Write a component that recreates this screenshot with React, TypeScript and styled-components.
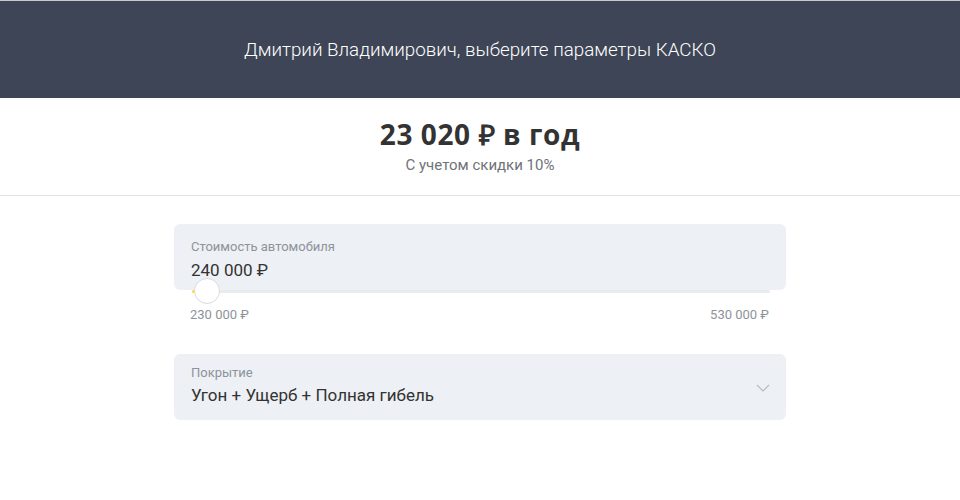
import React from 'react';
import styled, { createGlobalStyle } from 'styled-components';

const GlobalStyle = createGlobalStyle`
  body {
    margin: 0;
    background: #fff;
    font-family: Roboto, 'Liberation Sans', Arial, sans-serif;
    color: #333;
  }
`;

const Header = styled.header`
  height: 97px;
  border-top: 1px solid #c9c9c9;
  background: #3d4556;
  display: flex;
  align-items: center;
  justify-content: center;
  color: #fff;
  font-size: 18.8px;
  font-weight: 300;
`;

const PriceBlock = styled.section`
  height: 98px;
  border-bottom: 1px solid #e3e3e3;
  display: flex;
  flex-direction: column;
  align-items: center;
  padding-top: 19px;
  box-sizing: border-box;
`;

const Price = styled.div`
  font-family: 'Open Sans', sans-serif;
  font-weight: 700;
  font-size: 28px;
  letter-spacing: 0.6px;
  line-height: 34px;
  color: #333;
`;

const Discount = styled.div`
  margin-top: 5px;
  font-size: 15px;
  color: #6f7378;
`;

const Form = styled.div`
  width: 612px;
  margin: 28px auto 0;
  display: flex;
  flex-direction: column;
`;

const Field = styled.div<{ $pad: number; $gap: number }>`
  position: relative;
  height: 66px;
  background: #edf0f4;
  border-radius: 6px;
  padding: ${p => p.$pad}px 17px 0;
  box-sizing: border-box;

  & > div + div {
    margin-top: ${p => p.$gap}px;
  }
`;

const Label = styled.div`
  font-size: 13px;
  line-height: 16px;
  color: #8e939b;
`;

const Value = styled.div`
  font-size: 17px;
  line-height: 20px;
  color: #333;
`;

const SliderWrap = styled.div`
  position: relative;
  height: 3px;
  margin: 0 16px 0 18px;
`;

const Track = styled.div`
  height: 3px;
  background: #e9ebee;
  border-radius: 2px;
  overflow: hidden;
`;

const Fill = styled.div`
  height: 100%;
  background: #ffdd2d;
`;

const Thumb = styled.div`
  position: absolute;
  top: -12px;
  width: 24px;
  height: 24px;
  margin-left: -17px;
  border-radius: 50%;
  background: #fff;
  border: 1px solid #d9dbdf;
`;

const Limits = styled.div`
  display: flex;
  justify-content: space-between;
  padding: 14px 17px 0 16px;
  font-size: 13px;
  line-height: 16px;
  color: #8e939b;
`;

const Chevron = styled.svg`
  position: absolute;
  right: 16px;
  top: 30px;
`;

const Spacer = styled.div`
  height: 31px;
`;

export default function App() {
  const min = 230000;
  const max = 530000;
  const val = 240000;
  const pct = ((val - min) / (max - min)) * 100;

  return (
    <>
      <GlobalStyle />
      <Header>Дмитрий Владимирович, выберите параметры КАСКО</Header>
      <PriceBlock>
        <Price>23 020 ₽ в год</Price>
        <Discount>С учетом скидки 10%</Discount>
      </PriceBlock>
      <Form>
        <Field $pad={15} $gap={5}>
          <Label>Стоимость автомобиля</Label>
          <Value>240 000 ₽</Value>
        </Field>
        <SliderWrap>
          <Track>
            <Fill style={{ width: `${pct}%` }} />
          </Track>
          <Thumb style={{ left: `${pct}%` }} />
        </SliderWrap>
        <Limits>
          <span>230 000 ₽</span>
          <span>530 000 ₽</span>
        </Limits>
        <Spacer />
        <Field $pad={11} $gap={4}>
          <Label>Покрытие</Label>
          <Value>Угон + Ущерб + Полная гибель</Value>
          <Chevron width="14" height="8" viewBox="0 0 14 8" fill="none">
            <path d="M1 1l6 6 6-6" stroke="#b8bcc3" strokeWidth="1.2" />
          </Chevron>
        </Field>
      </Form>
    </>
  );
}
